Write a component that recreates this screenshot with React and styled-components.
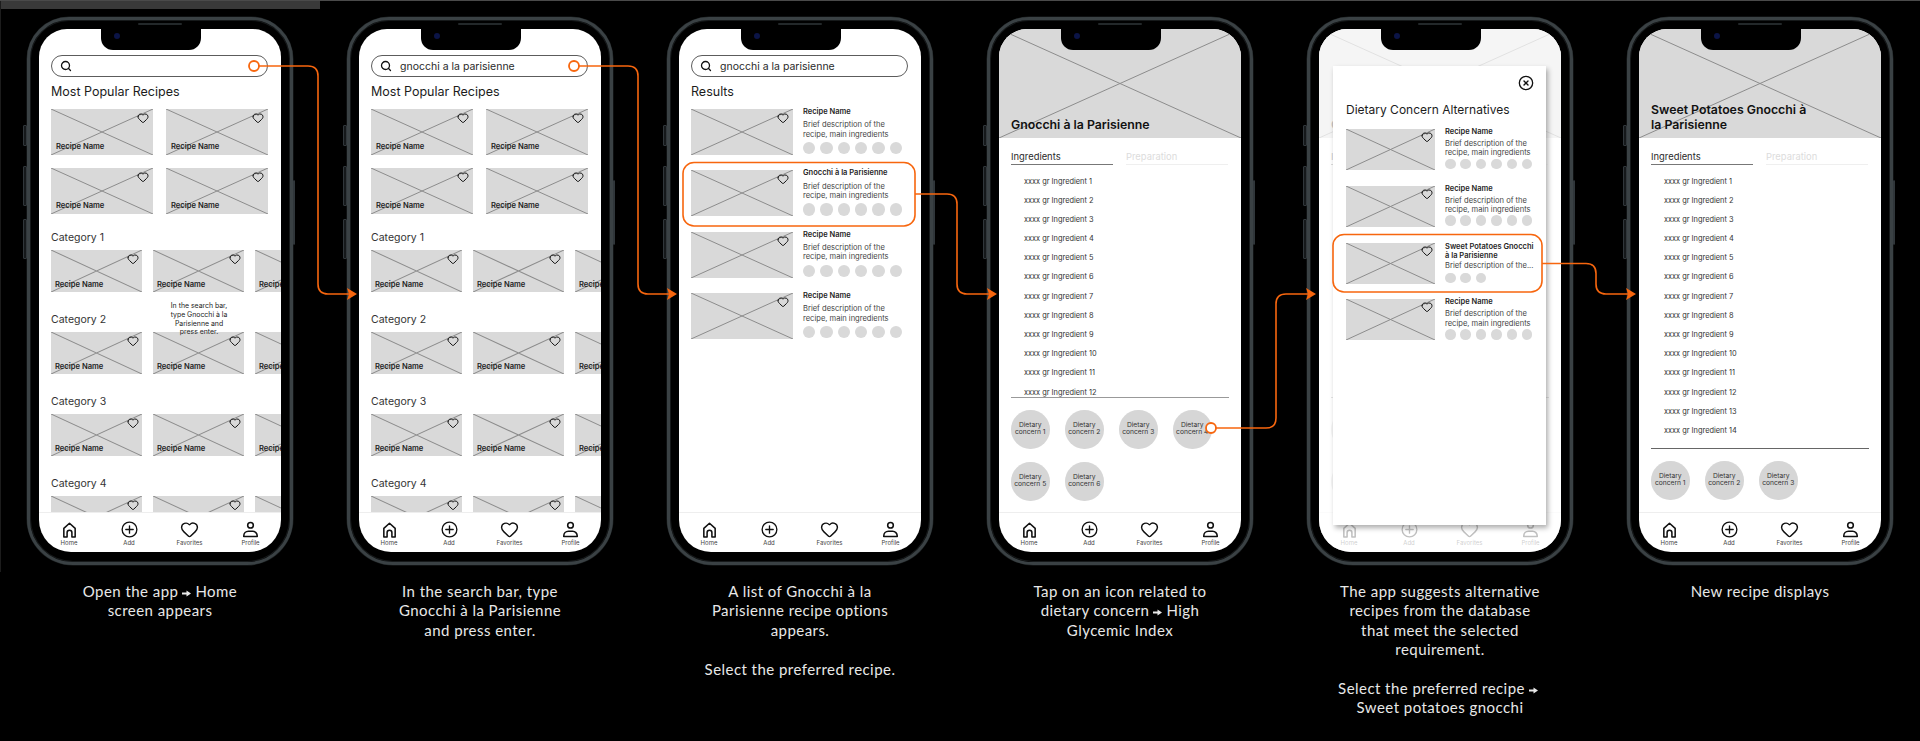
import React from 'react';
import styled, { createGlobalStyle } from 'styled-components';
import { Heart, Search, CircleX } from 'lucide-react';

const Global = createGlobalStyle`
  html, body { margin: 0; padding: 0; background: #000; }
  * { box-sizing: border-box; }
  #root { width: 1920px; height: 741px; overflow: hidden; }
`;

const Page = styled.div`
  position: relative;
  width: 1920px;
  height: 741px;
  background: #000;
  border-top: 1px solid #4a4a4a;
  font-family: Inter, "Liberation Sans", sans-serif;
  &::before {
    content: '';
    position: absolute;
    left: 0;
    top: 0;
    width: 1px;
    height: 571px;
    background: #1c1c1c;
  }
`;
const TopStrip = styled.div`
  width: 320px;
  height: 8px;
  background: #393939;
`;
const Columns = styled.div`
  display: grid;
  grid-template-columns: repeat(6, 320px);
  padding-top: 8px;
`;
const Column = styled.section`
  display: flex;
  flex-direction: column;
  align-items: center;
`;
const Phone = styled.div`
  position: relative;
  width: 266px;
  height: 548px;
  padding: 9px 9px 10px;
  border: 3px solid #3a4144;
  border-radius: 42px 42px 46px 46px;
  background: #000;
  box-shadow: inset 0 0 0 1px #16191a, 0 0 0 0.5px #1d2122;
`;
const SideButton = styled.div`
  position: absolute;
  top: ${p => p.$top}px;
  ${p => (p.$right ? 'right: -5px;' : 'left: -7px;')}
  width: ${p => (p.$right ? 2 : 4)}px;
  height: ${p => p.$h}px;
  background: #15181a;
  border: 1px solid #30363a;
  border-radius: 1px;
`;
const Notch = styled.div`
  position: absolute;
  z-index: 5;
  left: 71px;
  top: 9px;
  width: 100px;
  height: 21px;
  background: #000;
  border-radius: 0 0 12px 12px;
`;
const Camera = styled.div`
  position: absolute;
  left: 13px;
  top: 4px;
  width: 6px;
  height: 6px;
  border-radius: 50%;
  background: #0b1446;
`;
const Speaker = styled.div`
  position: absolute;
  z-index: 5;
  left: 108px;
  top: 3px;
  width: 44px;
  height: 2px;
  border-radius: 1px;
  background: #23282a;
`;
const Screen = styled.div`
  position: relative;
  width: 242px;
  height: 523px;
  background: #fff;
  border-radius: 28px 28px 32px 32px;
  overflow: hidden;
  display: flex;
  flex-direction: column;
`;
const Body = styled.div`
  flex: 1;
  min-height: 0;
  overflow: hidden;
  padding: 26px 0 0 12px;
`;
const SearchBar = styled.div`
  width: 217px;
  height: 22px;
  border: 1px solid #5c5c5c;
  border-radius: 11px;
  display: flex;
  align-items: center;
  padding-left: 8px;
  gap: 8px;
  font-size: 10.5px;
  color: #2a2a2a;
`;
const BigHeading = styled.h2`
  margin: 7px 0 9px;
  font-size: 12.5px;
  line-height: 16px;
  font-weight: 400;
  color: #1c1c1c;
`;
const TwoUp = styled.div`
  display: grid;
  grid-template-columns: 102px 102px;
  gap: 13px;
  margin-bottom: 17px;
`;
const Category = styled.div`
  padding-bottom: 21px;
`;
const CategoryTitle = styled.h3`
  margin: 0 0 5px;
  font-size: 10.5px;
  line-height: 14px;
  font-weight: 400;
  color: #333;
`;
const CategoryRow = styled.div`
  display: flex;
  gap: 11px;
`;
const Thumb = styled.div`
  position: relative;
  flex: none;
  width: ${p => p.$w}px;
  height: ${p => p.$h}px;
  background: #d9d9d9;
`;
const CrossSvg = styled.svg`
  position: absolute;
  inset: 0;
  width: 100%;
  height: 100%;
`;
const ThumbHeart = styled.span`
  position: absolute;
  right: ${p => p.$right}px;
  top: ${p => p.$top}px;
  display: flex;
  color: #111;
`;
const ThumbLabel = styled.span`
  position: absolute;
  left: ${p => p.$left}px;
  bottom: ${p => p.$bottom}px;
  font-size: 7.6px;
  line-height: 10px;
  font-weight: 600;
  color: #222;
  white-space: nowrap;
`;
const Hint = styled.div`
  position: absolute;
  left: 120px;
  top: 273px;
  width: 80px;
  text-align: center;
  font-size: 6.9px;
  line-height: 8.8px;
  color: #222;
`;

const ResultList = styled.div`
  display: flex;
  flex-direction: column;
  gap: 15.33px;
`;
const ResultRow = styled.div`
  display: flex;
  gap: 10px;
`;
const Info = styled.div`
  margin-top: -1px;
  min-width: 0;
`;
const InfoTitle = styled.div`
  font-size: 7.5px;
  line-height: ${p => (p.$tall ? 9.3 : 8)}px;
  font-weight: 600;
  color: #1e1e1e;
`;
const InfoText = styled.div`
  margin-top: ${p => p.$mt}px;
  font-size: 7.55px;
  line-height: 9.4px;
  color: #444;
  white-space: nowrap;
`;
const Dots = styled.div`
  display: flex;
  margin-top: ${p => p.$mt}px;
  gap: ${p => p.$gap}px;
`;
const Dot = styled.span`
  width: ${p => p.$d}px;
  height: ${p => p.$d}px;
  border-radius: 50%;
  background: #d9d9d9;
`;

const HeroImage = styled.div`
  position: relative;
  flex: none;
  height: 109px;
  background: #d9d9d9;
  display: flex;
  align-items: flex-end;
  padding: 0 12px 6px;
`;
const HeroTitle = styled.h1`
  position: relative;
  margin: 0;
  width: 162px;
  font-size: 12.3px;
  line-height: 15px;
  font-weight: 600;
  color: #111;
`;
const Tabs = styled.div`
  display: flex;
  gap: 13px;
  margin: 13px 12px 0;
`;
const Tab = styled.div`
  width: 102px;
  height: 13.5px;
  font-size: 9.4px;
  line-height: 12px;
  color: ${p => (p.$on ? '#2a2a2a' : '#dcdcdc')};
  border-bottom: 1.5px solid ${p => (p.$on ? '#777' : '#efefef')};
`;
const IngredientList = styled.ul`
  list-style: none;
  margin: 7px 0 0;
  padding: 0 0 0 25px;
  height: ${p => p.$h}px;
  overflow: hidden;
`;
const Ingredient = styled.li`
  height: 19.2px;
  font-size: 7.4px;
  line-height: 19.2px;
  color: #333;
`;
const Rule = styled.hr`
  margin: 0 12px;
  height: 1.5px;
  border: 0;
  background: ${p => p.$c};
`;
const Concerns = styled.div`
  display: flex;
  flex-wrap: wrap;
  gap: 13.5px 15.5px;
  margin: 12px 12px 0;
`;
const Concern = styled.div`
  width: 38.5px;
  height: 38.5px;
  border-radius: 50%;
  background: #d6d6d6;
  display: flex;
  align-items: center;
  justify-content: center;
  text-align: center;
  font-size: 6.7px;
  line-height: 7.4px;
  color: #333;
`;

const Nav = styled.nav`
  flex: none;
  margin-top: auto;
  height: 40px;
  border-top: 1px solid #eee;
  display: grid;
  grid-template-columns: 60px 60px 61px 61px;
  padding-top: 7.5px;
`;
const NavItem = styled.div`
  display: flex;
  flex-direction: column;
  align-items: center;
  color: #111;
`;
const NavIcon = styled.span`
  display: flex;
  align-items: center;
  justify-content: center;
  height: 18px;
`;
const NavLabel = styled.span`
  font-size: 6px;
  line-height: 8px;
  color: #444;
`;

const Veil = styled.div`
  position: absolute;
  inset: 0;
  background: rgba(255, 255, 255, 0.74);
`;
const Modal = styled.div`
  position: absolute;
  left: 14px;
  top: 37px;
  width: 213px;
  height: 459px;
  padding: 35px 0 0 13px;
  background: #fff;
  box-shadow: 2px 3px 5px rgba(0, 0, 0, 0.32);
`;
const Close = styled.span`
  position: absolute;
  right: 12px;
  top: 9px;
  display: flex;
  color: #111;
`;
const ModalHeading = styled.h2`
  margin: 0 0 11px;
  font-size: 12px;
  line-height: 17px;
  font-weight: 400;
  color: #1c1c1c;
`;
const ModalList = styled.div`
  display: flex;
  flex-direction: column;
  gap: 15.8px;
`;

const Caption = styled.p`
  margin: 17px 0 0;
  width: 250px;
  text-align: center;
  font-family: Lato, "Open Sans", sans-serif;
  font-size: 15px;
  line-height: 19.4px;
  color: #e8e8e8;
  letter-spacing: 0.45px;
`;
const Connectors = styled.svg`
  position: absolute;
  left: 0;
  top: -1px;
  width: 1920px;
  height: 741px;
  z-index: 10;
  pointer-events: none;
`;

const Cross = () => (
  <CrossSvg viewBox="0 0 100 100" preserveAspectRatio="none">
    <path d="M0 0L100 100M100 0L0 100" stroke="#8c8c8c" strokeWidth="1" fill="none" vectorEffect="non-scaling-stroke" />
  </CrossSvg>
);

const Card = ({ w, h, heartTop = 3, heartRight = 4, label, labelLeft = 5, labelBottom = 3 }) => (
  <Thumb $w={w} $h={h}>
    <Cross />
    <ThumbHeart $top={heartTop} $right={heartRight}>
      <Heart size={12} strokeWidth={2} />
    </ThumbHeart>
    {label && <ThumbLabel $left={labelLeft} $bottom={labelBottom}>Recipe Name</ThumbLabel>}
  </Thumb>
);

const HomeIcon = () => (
  <svg width="17" height="18" viewBox="0 0 24 24" fill="none" stroke="currentColor" strokeWidth="2.2" strokeLinejoin="round">
    <path d="M4 22V9.8L12 2.5l8 7.3V22h-4.6v-6.2a3.4 3.4 0 0 0-6.8 0V22z" />
  </svg>
);
const AddIcon = () => (
  <svg width="17" height="17" viewBox="0 0 24 24" fill="none" stroke="currentColor" strokeWidth="1.9" strokeLinecap="round">
    <circle cx="12" cy="12" r="10.4" />
    <path d="M12 6.8v10.4M6.8 12h10.4" />
  </svg>
);
const ProfileIcon = () => (
  <svg width="17" height="17" viewBox="0 0 24 24" fill="none" stroke="currentColor" strokeWidth="2.2" strokeLinejoin="round">
    <circle cx="12" cy="6" r="4" />
    <path d="M2.5 22v-1a6.5 6.5 0 0 1 6.5-6.5h6a6.5 6.5 0 0 1 6.5 6.5v1z" />
  </svg>
);

const BottomNav = () => (
  <Nav>
    <NavItem><NavIcon><HomeIcon /></NavIcon><NavLabel>Home</NavLabel></NavItem>
    <NavItem><NavIcon><AddIcon /></NavIcon><NavLabel>Add</NavLabel></NavItem>
    <NavItem><NavIcon><Heart size={19} strokeWidth={1.8} /></NavIcon><NavLabel>Favorites</NavLabel></NavItem>
    <NavItem><NavIcon><ProfileIcon /></NavIcon><NavLabel>Profile</NavLabel></NavItem>
  </Nav>
);

const PhoneFrame = ({ children }) => (
  <Phone>
    <SideButton $top={105} $h={21} />
    <SideButton $top={146} $h={40} />
    <SideButton $top={199} $h={40} />
    <SideButton $right $top={160} $h={65} />
    <Speaker />
    <Notch><Camera /></Notch>
    <Screen>{children}</Screen>
  </Phone>
);

const SearchField = ({ text }) => (
  <SearchBar>
    <Search size={12} strokeWidth={2.6} color="#111" />
    {text}
  </SearchBar>
);

const HomeBody = ({ search }) => (
  <Body>
    <SearchField text={search} />
    <BigHeading>Most Popular Recipes</BigHeading>
    <TwoUp>
      {[0, 1, 2, 3].map(i => <Card key={i} w={102} h={46} label />)}
    </TwoUp>
    {[1, 2, 3, 4].map(n => (
      <Category key={n}>
        <CategoryTitle>Category {n}</CategoryTitle>
        <CategoryRow>
          {[0, 1, 2].map(i => <Card key={i} w={91} h={42} heartRight={3} label labelLeft={4} labelBottom={2} />)}
        </CategoryRow>
      </Category>
    ))}
  </Body>
);

const LargeResult = ({ title }) => (
  <ResultRow>
    <Card w={102} h={46} />
    <Info>
      <InfoTitle>{title}</InfoTitle>
      <InfoText $mt={4.3}>Brief description of the<br />recipe, main ingredients</InfoText>
      <Dots $mt={3} $gap={5.03}>
        {[0, 1, 2, 3, 4, 5].map(i => <Dot key={i} $d={12.3} />)}
      </Dots>
    </Info>
  </ResultRow>
);

const ModalResult = ({ title, desc, dots = 6, tall }) => (
  <ResultRow>
    <Card w={89} h={41} heartTop={2} heartRight={2} />
    <Info>
      <InfoTitle $tall={tall}>{title}</InfoTitle>
      <InfoText $mt={tall ? 1.3 : 2.8}>{desc}</InfoText>
      <Dots $mt={tall ? 2 : 1} $gap={4.9}>
        {Array.from({ length: dots }).map((_, i) => <Dot key={i} $d={10.5} />)}
      </Dots>
    </Info>
  </ResultRow>
);

const Detail = ({ title, rows, listH, concerns, rule }) => (
  <>
    <HeroImage>
      <Cross />
      <HeroTitle>{title}</HeroTitle>
    </HeroImage>
    <Tabs>
      <Tab $on>Ingredients</Tab>
      <Tab>Preparation</Tab>
    </Tabs>
    <IngredientList $h={listH}>
      {Array.from({ length: rows }).map((_, i) => (
        <Ingredient key={i}>xxxx gr Ingredient {i + 1}</Ingredient>
      ))}
    </IngredientList>
    <Rule $c={rule} />
    <Concerns>
      {Array.from({ length: concerns }).map((_, i) => (
        <Concern key={i}>Dietary<br />concern {i + 1}</Concern>
      ))}
    </Concerns>
  </>
);

const Arrow = () => (
  <svg width="9" height="7" viewBox="0 0 9 7" style={{ margin: '0 4px' }}>
    <path d="M0 2.5H4.5V0.5L9 3.5L4.5 6.5V4.5H0z" fill="#e8e8e8" />
  </svg>
);

const desc2 = <>Brief description of the<br />recipe, main ingredients</>;
const ORANGE = '#f7660e';

const arrowHead = x => `${x - 10},288 ${x},294 ${x - 10},300 ${x - 8},294`;

const Overlay = () => (
  <Connectors viewBox="0 0 1920 741">
    <g fill="none" stroke={ORANGE} strokeWidth="1.6">
      <path d="M259 66H308Q318 66 318 76V284Q318 294 328 294H350" />
      <path d="M579 66H628Q638 66 638 76V284Q638 294 648 294H670" />
      <rect x="683" y="162.5" width="232" height="63.5" rx="11" />
      <path d="M915 194H947Q957 194 957 204V284Q957 294 967 294H990" />
      <path d="M1216 428H1266Q1276 428 1276 418V304Q1276 294 1286 294H1310" />
      <rect x="1333" y="234.5" width="209" height="57.5" rx="11" />
      <path d="M1542 263.5H1586Q1596 263.5 1596 273.5V284Q1596 294 1606 294H1630" />
    </g>
    <g fill={ORANGE}>
      {[357, 677, 997, 1316, 1636].map(x => <polygon key={x} points={arrowHead(x)} />)}
    </g>
    <g fill="#fff" stroke={ORANGE} strokeWidth="1.8">
      <circle cx="254" cy="66" r="5" />
      <circle cx="574" cy="66" r="5" />
      <circle cx="1211" cy="428" r="5" />
    </g>
  </Connectors>
);

export default function App() {
  return (
    <Page>
      <Global />
      <TopStrip />
      <Columns>
        <Column>
          <PhoneFrame>
            <HomeBody />
            <Hint>In the search bar,<br />type Gnocchi à la<br />Parisienne and<br />press enter.</Hint>
            <BottomNav />
          </PhoneFrame>
          <Caption>Open the app<Arrow />Home<br />screen appears</Caption>
        </Column>
        <Column>
          <PhoneFrame>
            <HomeBody search="gnocchi a la parisienne" />
            <BottomNav />
          </PhoneFrame>
          <Caption>In the search bar, type<br />Gnocchi à la Parisienne<br />and press enter.</Caption>
        </Column>
        <Column>
          <PhoneFrame>
            <Body>
              <SearchField text="gnocchi a la parisienne" />
              <BigHeading>Results</BigHeading>
              <ResultList>
                <LargeResult title="Recipe Name" />
                <LargeResult title="Gnocchi à la Parisienne" />
                <LargeResult title="Recipe Name" />
                <LargeResult title="Recipe Name" />
              </ResultList>
            </Body>
            <BottomNav />
          </PhoneFrame>
          <Caption>A list of Gnocchi à la<br />Parisienne recipe options<br />appears.<br /><br />Select the preferred recipe.</Caption>
        </Column>
        <Column>
          <PhoneFrame>
            <Detail title="Gnocchi à la Parisienne" rows={12} listH={225} concerns={6} rule="#999" />
            <BottomNav />
          </PhoneFrame>
          <Caption>Tap on an icon related to<br />dietary concern<Arrow />High<br />Glycemic Index</Caption>
        </Column>
        <Column>
          <PhoneFrame>
            <Detail title="Gnocchi à la Parisienne" rows={12} listH={225} concerns={6} rule="#999" />
            <BottomNav />
            <Veil />
            <Modal>
              <Close><CircleX size={16} strokeWidth={2} /></Close>
              <ModalHeading>Dietary Concern Alternatives</ModalHeading>
              <ModalList>
                <ModalResult title="Recipe Name" desc={desc2} />
                <ModalResult title="Recipe Name" desc={desc2} />
                <ModalResult tall title={<>Sweet Potatoes Gnocchi<br />à la Parisienne</>} desc="Brief description of the..." dots={3} />
                <ModalResult title="Recipe Name" desc={desc2} />
              </ModalList>
            </Modal>
          </PhoneFrame>
          <Caption>The app suggests alternative<br />recipes from the database<br />that meet the selected<br />requirement.<br /><br />Select the preferred recipe<Arrow /><br />Sweet potatoes gnocchi</Caption>
        </Column>
        <Column>
          <PhoneFrame>
            <Detail title="Sweet Potatoes Gnocchi à la Parisienne" rows={14} listH={276} concerns={3} rule="#666" />
            <BottomNav />
          </PhoneFrame>
          <Caption>New recipe displays</Caption>
        </Column>
      </Columns>
      <Overlay />
    </Page>
  );
}
